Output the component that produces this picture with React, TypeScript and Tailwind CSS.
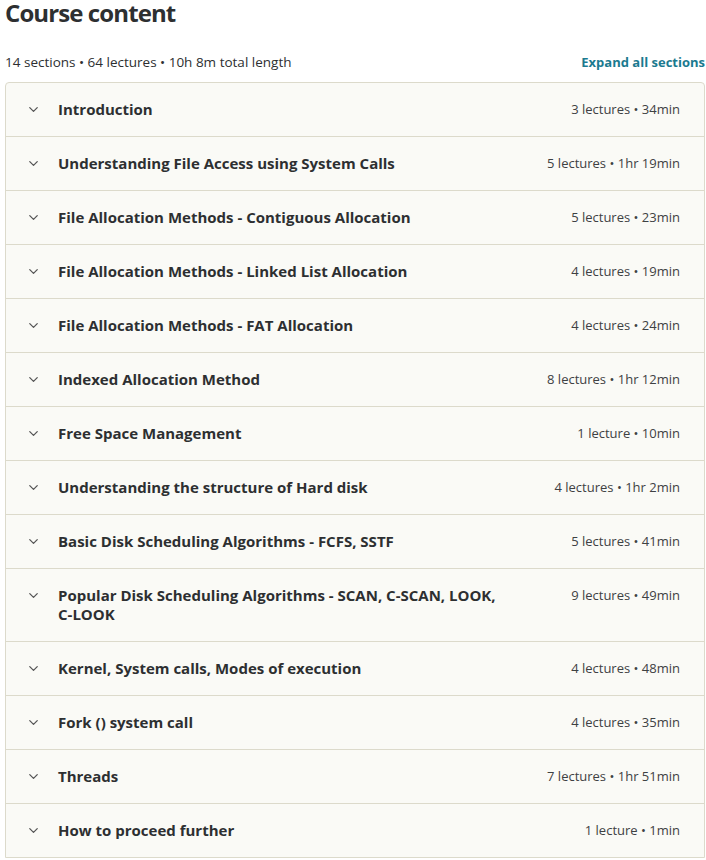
import { ChevronDown } from "lucide-react";

type Section = {
    title: string;
    lectures: number;
    length: string;
};

const sections: Section[] = [
    { title: "Introduction", lectures: 3, length: "34min" },
    { title: "Understanding File Access using System Calls", lectures: 5, length: "1hr 19min" },
    { title: "File Allocation Methods - Contiguous Allocation", lectures: 5, length: "23min" },
    { title: "File Allocation Methods - Linked List Allocation", lectures: 4, length: "19min" },
    { title: "File Allocation Methods - FAT Allocation", lectures: 4, length: "24min" },
    { title: "Indexed Allocation Method", lectures: 8, length: "1hr 12min" },
    { title: "Free Space Management", lectures: 1, length: "10min" },
    { title: "Understanding the structure of Hard disk", lectures: 4, length: "1hr 2min" },
    { title: "Basic Disk Scheduling Algorithms - FCFS, SSTF", lectures: 5, length: "41min" },
    { title: "Popular Disk Scheduling Algorithms - SCAN, C-SCAN, LOOK, C-LOOK", lectures: 9, length: "49min" },
    { title: "Kernel, System calls, Modes of execution", lectures: 4, length: "48min" },
    { title: "Fork () system call", lectures: 4, length: "35min" },
    { title: "Threads", lectures: 7, length: "1hr 51min" },
    { title: "How to proceed further", lectures: 1, length: "1min" },
];

// keep hyphenated words like "C-LOOK" on one line
const renderTitle = (title: string) =>
    title.split(" ").map((word, i) => (
        <span key={i} className={word.length > 1 && word.includes("-") ? "whitespace-nowrap" : ""}>
            {i > 0 ? " " : ""}
            {word}
        </span>
    ));

export default function App() {
    return (
        <div
            className="min-h-screen bg-white pl-[5px] pr-[1px] text-[#2d2f31]"
            style={{ fontFamily: '"Open Sans", "Noto Sans", sans-serif' }}
        >
            <h2 className="text-[24px] font-bold leading-[26px] tracking-[-0.9px]">Course content</h2>

            <div className="mt-[26px] flex items-center justify-between leading-[20px]">
                <span className="text-[13.5px]">14 sections • 64 lectures • 10h 8m total length</span>
                <button className="text-[13px] font-bold text-[#1b7a8f]">Expand all sections</button>
            </div>

            <div className="mt-[10px] overflow-hidden rounded-t-[4px] border border-[#dcdacb] bg-[#fafaf6]">
                {sections.map((s, i) => (
                    <div
                        key={s.title}
                        className={`flex items-start py-[17px] pl-[20px] pr-[24px] ${
                            i < sections.length - 1 ? "border-b border-[#dcdacb]" : ""
                        }`}
                    >
                        <ChevronDown className="mt-[2px] h-[15px] w-[15px] shrink-0 text-[#555]" strokeWidth={2} />
                        <div className="ml-[17px] flex-1 pr-[40px] text-[15px] font-bold leading-[19px]">
                            {renderTitle(s.title)}
                        </div>
                        <div className="shrink-0 text-[13px] leading-[19px] text-[#3e4143]">
                            {s.lectures} {s.lectures === 1 ? "lecture" : "lectures"} • {s.length}
                        </div>
                    </div>
                ))}
            </div>
        </div>
    );
}
